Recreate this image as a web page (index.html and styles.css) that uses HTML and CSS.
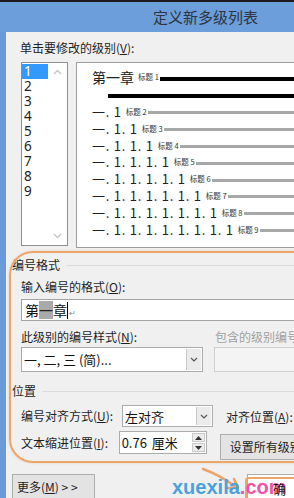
FILE: index.html
```html
<!DOCTYPE html>
<html lang="zh-CN">
<head>
<meta charset="utf-8">
<link rel="stylesheet" href="styles.css">
</head>
<body>
<div class="topline"></div>
<div class="titlebar">定义新多级列表</div>
<div class="dialog">
  <div class="top">
    <div class="lbl">单击要修改的级别(<u>V</u>):</div>
    <div class="levels">
      <div class="listbox">
        <div class="items">
          <div class="item sel">1</div>
          <div class="item">2</div>
          <div class="item">3</div>
          <div class="item">4</div>
          <div class="item">5</div>
          <div class="item">6</div>
          <div class="item">7</div>
          <div class="item">8</div>
          <div class="item">9</div>
        </div>
        <div class="vscroll">
          <svg width="9" height="6" viewBox="0 0 9 6"><path d="M1 5 L4.5 1.5 L8 5" fill="none" stroke="#c4c4c4" stroke-width="1.3"/></svg>
          <svg width="9" height="6" viewBox="0 0 9 6"><path d="M1 1 L4.5 4.5 L8 1" fill="none" stroke="#c4c4c4" stroke-width="1.3"/></svg>
        </div>
      </div>
      <div class="preview">
        <div class="prow first"><span class="num big">第一章</span><span class="tag">标题 1</span><span class="bar black"></span></div>
        <div class="prow barrow"><span class="bar black thick"></span></div>
        <div class="prow lvl"><span class="num">一. 1</span><span class="tag">标题 2</span><span class="bar"></span></div>
        <div class="prow lvl"><span class="num">一. 1. 1</span><span class="tag">标题 3</span><span class="bar"></span></div>
        <div class="prow lvl"><span class="num">一. 1. 1. 1</span><span class="tag">标题 4</span><span class="bar"></span></div>
        <div class="prow lvl"><span class="num">一. 1. 1. 1. 1</span><span class="tag">标题 5</span><span class="bar"></span></div>
        <div class="prow lvl"><span class="num">一. 1. 1. 1. 1. 1</span><span class="tag">标题 6</span><span class="bar"></span></div>
        <div class="prow lvl"><span class="num">一. 1. 1. 1. 1. 1. 1</span><span class="tag">标题 7</span><span class="bar"></span></div>
        <div class="prow lvl"><span class="num">一. 1. 1. 1. 1. 1. 1. 1</span><span class="tag">标题 8</span><span class="bar"></span></div>
        <div class="prow lvl"><span class="num">一. 1. 1. 1. 1. 1. 1. 1. 1</span><span class="tag">标题 9</span><span class="bar"></span></div>
      </div>
    </div>
  </div>

  <div class="ghead first-head"><span>编号格式</span><span class="gline"></span></div>
  <div class="group">
    <div class="lbl">输入编号的格式(<u>O</u>):</div>
    <div class="textbox"><span>第</span><span class="hl">一</span><span>章</span><span class="caret"></span><span class="ret">↵</span></div>
    <div class="cols">
      <div class="col-left">
        <div class="lbl">此级别的编号样式(<u>N</u>):</div>
        <div class="combo wide"><span class="ctext">一, 二, 三 (简)...</span><span class="dd"><svg width="8" height="5" viewBox="0 0 8 5"><path d="M1 1 L4 4 L7 1" fill="none" stroke="#555" stroke-width="1.2"/></svg></span></div>
      </div>
      <div class="col-right">
        <div class="lbl dis">包含的级别编号来自(<u>L</u>):</div>
        <div class="combo disabled"></div>
      </div>
    </div>
  </div>

  <div class="ghead pos-head"><span>位置</span><span class="gline"></span></div>
  <div class="group">
    <div class="frow r1">
      <div class="flbl">编号对齐方式(<u>U</u>):</div>
      <div class="combo small"><span class="ctext">左对齐</span><span class="dd"><svg width="8" height="5" viewBox="0 0 8 5"><path d="M1 1 L4 4 L7 1" fill="none" stroke="#555" stroke-width="1.2"/></svg></span></div>
      <div class="flbl2">对齐位置(<u>A</u>):</div>
    </div>
    <div class="frow r2">
      <div class="flbl">文本缩进位置(<u>I</u>):</div>
      <div class="spin"><span class="ctext">0.76 厘米</span><span class="spbtns"><span class="sp"><svg width="7" height="4" viewBox="0 0 7 4"><path d="M0 4 L3.5 0 L7 4Z" fill="#333"/></svg></span><span class="sp"><svg width="7" height="4" viewBox="0 0 7 4"><path d="M0 0 L3.5 4 L7 0Z" fill="#333"/></svg></span></span></div>
      <div class="btn setall">设置所有级别(<u>E</u>)...</div>
    </div>
  </div>

  <div class="bottom">
    <div class="btn more">更多(<u>M</u>) &gt; &gt;</div>
    <div class="btn ok">确定</div>
  </div>
</div>

<div class="annot-big"></div>
<svg class="arrow" width="60" height="40" viewBox="0 0 60 40"><path d="M3 4 Q 20 10 36 22" fill="none" stroke="#eba36a" stroke-width="2.6" stroke-linecap="round"/><path d="M28 23 L38 23 L34 14" fill="none" stroke="#eba36a" stroke-width="2.6" stroke-linecap="round" stroke-linejoin="round"/></svg>
<div class="annot-ok"></div>
<div class="wm"><span class="wb">xuexila</span><span class="wp">.com</span></div>
<div class="okover">确</div>
</body>
</html>
```

FILE: styles.css
```css
* { box-sizing: border-box; }
html, body { margin: 0; padding: 0; }
body {
  width: 294px;
  height: 498px;
  overflow: hidden;
  position: relative;
  background: #6a9bd8;
  font-family: "Noto Sans CJK SC", "Noto Sans", sans-serif;
  font-size: 12px;
  color: #1e1e1e;
}
u { text-decoration: underline; text-underline-offset: 1px; }
.topline { height: 2px; background: #1c1c1c; }
.titlebar {
  height: 30px;
  line-height: 30px;
  padding-left: 153px;
  font-size: 15px;
  color: #2e3440;
  background: #6b9edb;
  white-space: nowrap;
}
.dialog {
  margin-left: 6px;
  width: 330px;
  height: 466px;
  background: #f0f0f0;
  padding-top: 8px;
}
.lbl { line-height: 16px; height: 16px; white-space: nowrap; }
.dis { color: #a0a0a0; }
.top { padding-left: 14px; }
.levels { display: flex; margin-top: 6px; }
.listbox {
  margin-left: 1px;
  width: 47px;
  height: 184px;
  border: 1px solid #8e8f8f;
  background: #fff;
  display: flex;
}
.items { width: 26px; padding-top: 1px; }
.item {
  height: 15px;
  line-height: 15px;
  padding-left: 2px;
  font-family: "Noto Sans", sans-serif;
  font-size: 13.5px;
  color: #222;
}
.item.sel { background: #3399ff; color: #fff; }
.vscroll {
  flex: 1;
  display: flex;
  flex-direction: column;
  justify-content: space-between;
  align-items: center;
  padding: 6px 0 6px;
}
.preview {
  margin-left: 8px;
  width: 240px;
  height: 186px;
  border: 1px solid #9c9c9c;
  background: #fff;
  padding-left: 15px;
  padding-top: 5px;
}
.prow { display: flex; align-items: center; white-space: nowrap; }
.prow.first { height: 18px; }
.prow.barrow { height: 4px; margin-top: 8px; padding-left: 16px; }
.prow.lvl { height: 16.8px; }
.prow.lvl:nth-child(3) { margin-top: 5.6px; }
.num { font-size: 13px; color: #222; line-height: 16px; letter-spacing: 0.75px; }
.num.big { font-size: 14px; letter-spacing: 0; }
.tag { font-size: 7.5px; color: #333; margin-left: 4px; margin-right: 1px; line-height: 10px; }
.bar { flex: 1; height: 3px; background: #a8a8a8; margin-top: 2px; }
.bar.black { background: #000; height: 4px; margin-top: 3px; }
.bar.thick { margin-top: 0; }

.ghead { display: flex; align-items: center; padding-left: 6px; line-height: 16px; height: 16px; }
.ghead .gline { flex: 1; height: 1px; background: #dcdcdc; margin-left: 6px; }
.first-head { margin-top: 9px; }
.group { padding-left: 15px; }
.group > .lbl:first-child { margin-top: 6px; }
.textbox {
  margin-top: 4px;
  height: 22px;
  width: 300px;
  border: 1px solid #a3a3a3;
  background: #fff;
  display: flex;
  align-items: center;
  padding-left: 3px;
  font-size: 14px;
  color: #111;
}
.textbox .hl { background: #a9a9a9; color: #222; line-height: 18px; }
.textbox .caret { width: 1px; height: 17px; background: #000; }
.textbox .ret { font-size: 8px; color: #888; margin-left: 1px; margin-top: 4px; }
.cols { display: flex; margin-top: 8px; }
.col-left { width: 182px; }
.col-right { margin-left: 11px; width: 120px; }
.col-right .lbl { padding-left: 1px; }
.combo {
  margin-top: 2px;
  height: 25px;
  border: 1px solid #acacac;
  background: #fff;
  display: flex;
  align-items: center;
}
.combo.disabled { background: #f4f4f4; border-color: #cfcfcf; }
.ctext { flex: 1; padding-left: 2px; font-size: 13px; white-space: nowrap; color: #111; }
.dd {
  width: 15px;
  align-self: stretch;
  margin: 1px 1px 1px 0;
  background: #ebebeb;
  border-left: 1px solid #c8c8c8;
  display: flex;
  align-items: center;
  justify-content: center;
}
.pos-head { margin-top: 11px; }
.frow { display: flex; white-space: nowrap; }
.r1 { margin-top: 6px; height: 22px; align-items: center; }
.r2 { margin-top: 4px; align-items: flex-start; }
.flbl { width: 101px; line-height: 16px; }
.r2 .flbl { margin-top: 4px; }
.combo.small { margin-top: 0; width: 91px; height: 22px; }
.flbl2 { margin-left: 13px; }
.spin {
  width: 91px;
  height: 23px;
  border: 1px solid #acacac;
  background: #fff;
  display: flex;
  align-items: center;
}
.spin .ctext { word-spacing: 2px; }
.spbtns {
  width: 13px;
  align-self: stretch;
  margin: 1px 1px 1px 0;
  display: flex;
  flex-direction: column;
  gap: 1px;
}
.sp {
  flex: 1;
  background: #ececec;
  border: 1px solid #c9c9c9;
  display: flex;
  align-items: center;
  justify-content: center;
}
.btn {
  height: 26px;
  line-height: 24px;
  border: 1px solid #adadad;
  background: #e3e3e3;
  white-space: nowrap;
  color: #1e1e1e;
}
.setall { margin-left: 13px; margin-top: 3px; padding-left: 9px; width: 120px; }
.bottom { display: flex; padding-left: 6px; margin-top: 14px; }
.more { width: 83px; padding-left: 4px; }
.ok { margin-left: 152px; width: 75px; background: #fff; color: #fff; }

.annot-big {
  position: absolute;
  left: 9px;
  top: 251px;
  width: 310px;
  height: 212px;
  border: 2.5px solid #eca56b;
  border-radius: 24px;
  box-shadow: 0 0 2px rgba(236,165,107,0.6);
}
.arrow { position: absolute; left: 200px; top: 465px; }
.annot-ok {
  position: absolute;
  left: 245px;
  top: 477px;
  width: 60px;
  height: 30px;
  border: 2.5px solid #eca56b;
  border-radius: 4px;
}
.wm {
  position: absolute;
  left: 172px;
  top: 477px;
  font-family: "Liberation Sans", Arial, sans-serif;
  font-weight: bold;
  font-size: 20px;
  line-height: 20px;
  white-space: nowrap;
}
.wb { color: #4aa2dc; }
.wp { color: #f154a6; }
.okover {
  position: absolute;
  left: 273px;
  top: 481px;
  font-size: 13px;
  line-height: 16px;
  color: #1a1a1a;
}
```
